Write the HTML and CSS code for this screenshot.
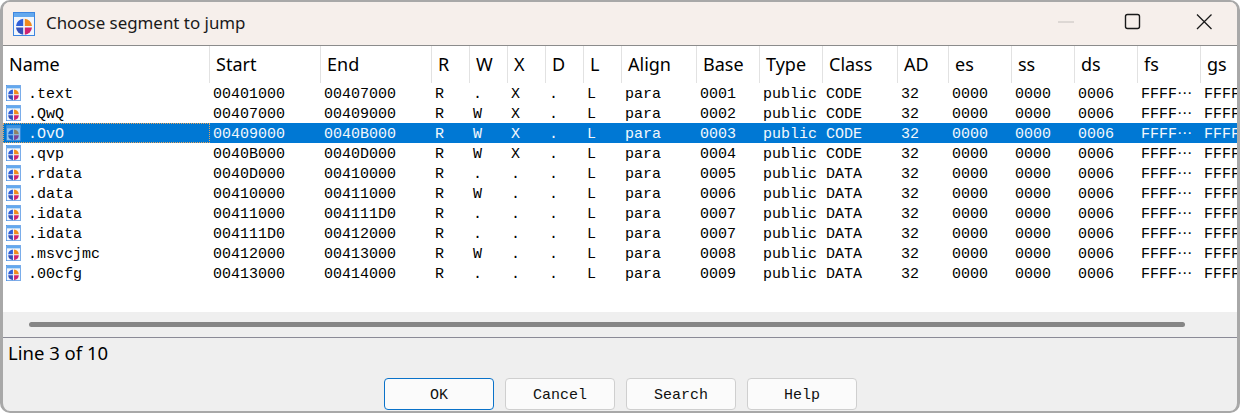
FILE: index.html
```html
<!DOCTYPE html>
<html lang="en">
<head>
<meta charset="utf-8">
<title>Choose segment to jump</title>
<link rel="stylesheet" href="styles.css">
</head>
<body>
<svg class="defs" width="0" height="0" aria-hidden="true">
  <symbol id="seg" viewBox="0 0 22 24">
    <rect x="0.5" y="0.5" width="21" height="23" fill="#f1f6fd" stroke="#3d86e0"/>
    <rect x="1" y="1" width="20" height="4" fill="#63a8ee"/>
    <path d="M10.2 6.700V13.900H3A8 8 0 0 1 10.200 6.700Z" fill="#2f5fd8"/>
    <path d="M11.800 6.700V13.900H19A8 8 0 0 0 11.800 6.700Z" fill="#f08a1d"/>
    <path d="M10.200 15.500V22.700A8 8 0 0 1 3 15.500Z" fill="#3550b8"/>
    <path d="M11.800 15.500V22.700A8 8 0 0 0 19 15.500Z" fill="#cf2470"/>
  </symbol>
</svg>
<div class="window">
  <header class="titlebar">
    <svg class="app-icon"><use href="#seg"/></svg>
    <span class="title">Choose segment to jump</span>
    <div class="controls">
      <svg class="ctl" viewBox="0 0 46 30"><path d="M15 15H31" stroke="#c4c0bd" stroke-width="1"/></svg>
      <svg class="ctl" viewBox="0 0 46 30"><rect x="13.500" y="7.500" width="14" height="14" rx="2" fill="none" stroke="#1a1a1a" stroke-width="1.400"/></svg>
      <svg class="ctl" viewBox="0 0 46 30"><path d="M16 7.500L30.500 22M30.500 7.500L16 22" stroke="#1a1a1a" stroke-width="1.300"/></svg>
    </div>
  </header>
  <div class="list">
    <div class="grid">
      <div class="row head"><div class="th">Name</div><div class="th">Start</div><div class="th">End</div><div class="th">R</div><div class="th">W</div><div class="th">X</div><div class="th">D</div><div class="th">L</div><div class="th">Align</div><div class="th">Base</div><div class="th">Type</div><div class="th">Class</div><div class="th">AD</div><div class="th">es</div><div class="th">ss</div><div class="th">ds</div><div class="th">fs</div><div class="th">gs</div></div>
      <div class="row"><div class="td nm"><svg class="ico"><use href="#seg"/></svg>.text</div><div class="td">00401000</div><div class="td">00407000</div><div class="td">R</div><div class="td">.</div><div class="td">X</div><div class="td">.</div><div class="td">L</div><div class="td">para</div><div class="td">0001</div><div class="td">public</div><div class="td">CODE</div><div class="td">32</div><div class="td">0000</div><div class="td">0000</div><div class="td">0006</div><div class="td">FFFF⋯</div><div class="td">FFFF⋯</div></div>
      <div class="row"><div class="td nm"><svg class="ico"><use href="#seg"/></svg>.QwQ</div><div class="td">00407000</div><div class="td">00409000</div><div class="td">R</div><div class="td">W</div><div class="td">X</div><div class="td">.</div><div class="td">L</div><div class="td">para</div><div class="td">0002</div><div class="td">public</div><div class="td">CODE</div><div class="td">32</div><div class="td">0000</div><div class="td">0000</div><div class="td">0006</div><div class="td">FFFF⋯</div><div class="td">FFFF⋯</div></div>
      <div class="row sel"><div class="td nm"><svg class="ico"><use href="#seg"/></svg>.OvO</div><div class="td">00409000</div><div class="td">0040B000</div><div class="td">R</div><div class="td">W</div><div class="td">X</div><div class="td">.</div><div class="td">L</div><div class="td">para</div><div class="td">0003</div><div class="td">public</div><div class="td">CODE</div><div class="td">32</div><div class="td">0000</div><div class="td">0000</div><div class="td">0006</div><div class="td">FFFF⋯</div><div class="td">FFFF⋯</div></div>
      <div class="row"><div class="td nm"><svg class="ico"><use href="#seg"/></svg>.qvp</div><div class="td">0040B000</div><div class="td">0040D000</div><div class="td">R</div><div class="td">W</div><div class="td">X</div><div class="td">.</div><div class="td">L</div><div class="td">para</div><div class="td">0004</div><div class="td">public</div><div class="td">CODE</div><div class="td">32</div><div class="td">0000</div><div class="td">0000</div><div class="td">0006</div><div class="td">FFFF⋯</div><div class="td">FFFF⋯</div></div>
      <div class="row"><div class="td nm"><svg class="ico"><use href="#seg"/></svg>.rdata</div><div class="td">0040D000</div><div class="td">00410000</div><div class="td">R</div><div class="td">.</div><div class="td">.</div><div class="td">.</div><div class="td">L</div><div class="td">para</div><div class="td">0005</div><div class="td">public</div><div class="td">DATA</div><div class="td">32</div><div class="td">0000</div><div class="td">0000</div><div class="td">0006</div><div class="td">FFFF⋯</div><div class="td">FFFF⋯</div></div>
      <div class="row"><div class="td nm"><svg class="ico"><use href="#seg"/></svg>.data</div><div class="td">00410000</div><div class="td">00411000</div><div class="td">R</div><div class="td">W</div><div class="td">.</div><div class="td">.</div><div class="td">L</div><div class="td">para</div><div class="td">0006</div><div class="td">public</div><div class="td">DATA</div><div class="td">32</div><div class="td">0000</div><div class="td">0000</div><div class="td">0006</div><div class="td">FFFF⋯</div><div class="td">FFFF⋯</div></div>
      <div class="row"><div class="td nm"><svg class="ico"><use href="#seg"/></svg>.idata</div><div class="td">00411000</div><div class="td">004111D0</div><div class="td">R</div><div class="td">.</div><div class="td">.</div><div class="td">.</div><div class="td">L</div><div class="td">para</div><div class="td">0007</div><div class="td">public</div><div class="td">DATA</div><div class="td">32</div><div class="td">0000</div><div class="td">0000</div><div class="td">0006</div><div class="td">FFFF⋯</div><div class="td">FFFF⋯</div></div>
      <div class="row"><div class="td nm"><svg class="ico"><use href="#seg"/></svg>.idata</div><div class="td">004111D0</div><div class="td">00412000</div><div class="td">R</div><div class="td">.</div><div class="td">.</div><div class="td">.</div><div class="td">L</div><div class="td">para</div><div class="td">0007</div><div class="td">public</div><div class="td">DATA</div><div class="td">32</div><div class="td">0000</div><div class="td">0000</div><div class="td">0006</div><div class="td">FFFF⋯</div><div class="td">FFFF⋯</div></div>
      <div class="row"><div class="td nm"><svg class="ico"><use href="#seg"/></svg>.msvcjmc</div><div class="td">00412000</div><div class="td">00413000</div><div class="td">R</div><div class="td">W</div><div class="td">.</div><div class="td">.</div><div class="td">L</div><div class="td">para</div><div class="td">0008</div><div class="td">public</div><div class="td">DATA</div><div class="td">32</div><div class="td">0000</div><div class="td">0000</div><div class="td">0006</div><div class="td">FFFF⋯</div><div class="td">FFFF⋯</div></div>
      <div class="row"><div class="td nm"><svg class="ico"><use href="#seg"/></svg>.00cfg</div><div class="td">00413000</div><div class="td">00414000</div><div class="td">R</div><div class="td">.</div><div class="td">.</div><div class="td">.</div><div class="td">L</div><div class="td">para</div><div class="td">0009</div><div class="td">public</div><div class="td">DATA</div><div class="td">32</div><div class="td">0000</div><div class="td">0000</div><div class="td">0006</div><div class="td">FFFF⋯</div><div class="td">FFFF⋯</div></div>
    </div>
    <div class="hscroll"><div class="thumb"></div></div>
  </div>
  <div class="status">Line 3 of 10</div>
  <div class="buttons">
    <button class="btn default">OK</button>
    <button class="btn">Cancel</button>
    <button class="btn">Search</button>
    <button class="btn">Help</button>
  </div>
</div>
</body>
</html>
```
FILE: styles.css
```css
* { box-sizing: border-box; }
html, body { margin: 0; height: 413px; overflow: hidden; background: #fff; }
.defs { display: block; height: 0; }
.window {
  width: 1240px;
  height: 413px;
  display: flex;
  flex-direction: column;
  background: #efefef;
  border: solid #a8a8a8;
  border-width: 2px 3px 2px 3px;
  border-radius: 10px;
  overflow: hidden;
  font-family: "Noto Sans", sans-serif;
  color: #000;
}
.titlebar {
  height: 43px;
  flex: none;
  display: flex;
  align-items: center;
  padding-left: 10px;
  background: #f6efeb;
}
.app-icon { width: 22px; height: 24px; flex: none; }
.title { margin-left: 11px; margin-top: -3px; font-size: 16.900px; color: #1a1a1a; }
.controls { margin-left: auto; display: flex; gap: 23px; margin-right: 10px; margin-top: -3px; }
.ctl { width: 46px; height: 30px; display: block; }
.list {
  flex: none;
  height: 293px;
  display: flex;
  flex-direction: column;
  border-top: 1px solid #8b8b8b;
  border-bottom: 1px solid #8a8a96;
  overflow: hidden;
  background: #fff;
}
.grid {
  flex: none;
  width: 1234px;
  height: 266px;
  font-family: "Liberation Mono", "DejaVu Sans", monospace;
  font-size: 15px;
}
.row {
  display: grid;
  grid-template-columns: 207px 111px 111px 38px 38px 38px 38px 38px 75px 63px 63px 75px 51px 63px 63px 63px 63px 36px;
}
.th {
  height: 37px;
  padding: 0 0 1px 6px;
  display: flex;
  align-items: center;
  font: 400 18px "Noto Sans", sans-serif;
  border-right: 1px solid #e2e2e2;
  white-space: nowrap;
  overflow: hidden;
}
.th:last-child { border-right: 0; }
.td {
  height: 20px;
  padding: 0 0 0 3px;
  line-height: 24px;
  white-space: nowrap;
  overflow: hidden;
  color: #000;
}
.nm { display: flex; align-items: flex-start; }
.ico { width: 15px; height: 16px; margin: 2px 7px 0 0; flex: none; }
.sel { background: #0078d4; }
.sel .td { color: #f2f8fd; }
.sel .nm { outline: 1px dotted #e8a55c; outline-offset: -1px; }
.sel .ico { opacity: 0.6; }
.hscroll {
  flex: none;
  height: 25px;
  background: #efefef;
  padding: 10px 52px 0 26px;
}
.thumb { height: 5px; border-radius: 3px; background: #868686; }
.status {
  flex: none;
  height: 31px;
  padding: 0 0 0 5px;
  font-size: 18.500px;
  line-height: 29px;
}
.buttons {
  display: flex;
  gap: 11px;
  padding: 9px 0 0 381px;
}
.btn {
  width: 110px;
  height: 32px;
  padding: 2px 0 0;
  background: #fbfbfb;
  border: 1px solid #cfcfcf;
  border-radius: 4px;
  font-family: "Liberation Mono", monospace;
  font-size: 15px;
  color: #111;
}
.btn.default { border: 1.500px solid #0a72c9; }
```
